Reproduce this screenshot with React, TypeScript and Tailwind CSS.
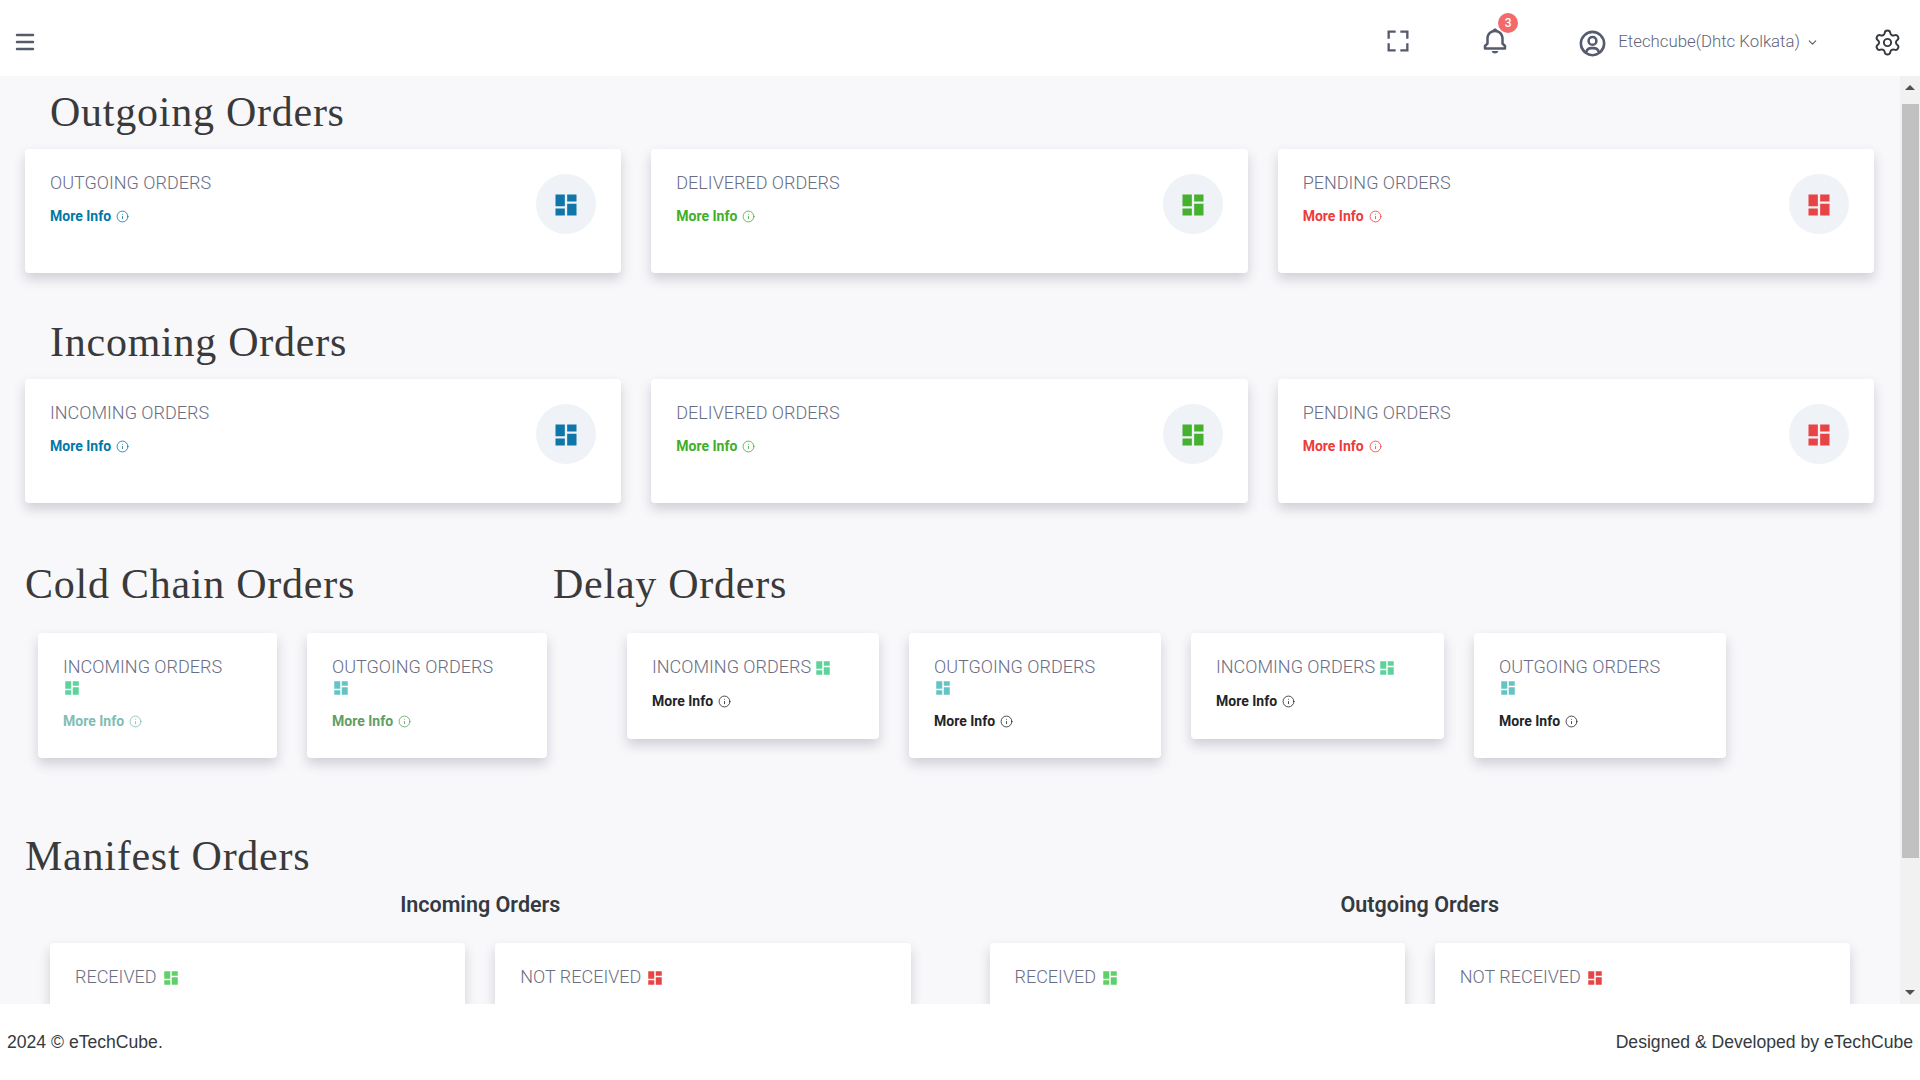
import { BiBell, BiFullscreen, BiUserCircle } from "react-icons/bi";
import { MdDashboard } from "react-icons/md";
import { ChevronDown, Info, Menu, Settings } from "lucide-react";

function Heading({ children, className = "" }: { children: string; className?: string }) {
  return (
    <h2 className={`font-['Liberation_Serif',serif] text-[42px] leading-[48px] tracking-[0.75px] text-[#3a3a3a] ${className}`}>
      {children}
    </h2>
  );
}

function MoreInfo({ color }: { color: string }) {
  return (
    <div className={`flex items-center gap-[5px] text-[14px] font-bold leading-[20px] ${color}`}>
      More Info
      <Info size={13} strokeWidth={1.5} className="mt-[1px]" />
    </div>
  );
}

function StatCard({ title, color, iconColor }: { title: string; color: string; iconColor: string }) {
  return (
    <div className="h-[124px] rounded-[4px] bg-white p-[25px] shadow-[0_6px_12px_rgba(60,64,80,0.22)] flex justify-between">
      <div>
        <div className="-mt-[1px] text-[18px] font-light leading-[20px] text-[#6a6e84]">{title}</div>
        <div className="mt-[13px]">
          <MoreInfo color={color} />
        </div>
      </div>
      <div className="flex h-[60px] w-[60px] items-center justify-center rounded-full bg-[#eff2f7]">
        <MdDashboard size={28} className={`mt-[2px] ${iconColor}`} />
      </div>
    </div>
  );
}

function SmallCard({
  title,
  moreColor,
  iconColor,
  inline = false,
}: {
  title: string;
  moreColor: string;
  iconColor: string;
  inline?: boolean;
}) {
  return (
    <div
      className={`rounded-[4px] bg-white px-[25px] pt-[24px] shadow-[0_6px_12px_rgba(60,64,80,0.22)] ${
        inline ? "h-[106px]" : "h-[125px]"
      }`}
    >
      <div className="text-[18px] font-light leading-[20px] text-[#6a6e84]">
        {title}
        {inline ? (
          <MdDashboard size={18} className={`ml-[3px] inline-block align-[-4px] ${iconColor}`} />
        ) : (
          <MdDashboard size={18} className={`mt-[2px] block ${iconColor}`} />
        )}
      </div>
      <div className="mt-[14px]">
        <MoreInfo color={moreColor} />
      </div>
    </div>
  );
}

function ManifestCard({ title, iconColor }: { title: string; iconColor: string }) {
  return (
    <div className="h-[100px] rounded-[4px] bg-white px-[25px] pt-[24px] shadow-[0_6px_12px_rgba(60,64,80,0.22)]">
      <div className="text-[18px] font-light leading-[20px] text-[#6a6e84]">
        {title}
        <MdDashboard size={18} className={`ml-[5px] inline-block align-[-4px] ${iconColor}`} />
      </div>
    </div>
  );
}

function Scrollbar() {
  return (
    <div className="flex w-[20px] shrink-0 flex-col items-center bg-[#f1f1f1]">
      <div className="flex h-[28px] items-start justify-center pt-[9px]">
        <div className="h-0 w-0 border-x-[5px] border-b-[5px] border-x-transparent border-b-[#505050]" />
      </div>
      <div className="h-[754px] w-[17px] bg-[#c1c1c1]" />
      <div className="flex-1" />
      <div className="flex h-[28px] items-end justify-center pb-[9px]">
        <div className="h-0 w-0 border-x-[5px] border-t-[5px] border-x-transparent border-t-[#505050]" />
      </div>
    </div>
  );
}

export default function App() {
  return (
    <div className="flex h-[1080px] w-[1920px] flex-col overflow-hidden bg-white font-['Roboto',sans-serif]">
      <header className="flex h-[76px] shrink-0 items-center bg-white pl-[13px] pr-[18px] pt-[8px]">
        <Menu size={24} strokeWidth={2.5} className="text-[#555b6d]" />
        <div className="flex-1" />
        <BiFullscreen size={28} className="-mt-[2px] text-[#555b6d]" />
        <div className="relative -mt-[2px] ml-[68px]">
          <BiBell size={30} className="text-[#555b6d]" />
          <span className="absolute -right-[8px] -top-[13px] flex h-[20px] w-[20px] items-center justify-center rounded-full bg-[#f46a6a] text-[12px] font-medium text-white">
            3
          </span>
        </div>
        <BiUserCircle size={31} className="ml-[67px] mt-[3px] text-[#555b6d]" />
        <span className="ml-[10px] text-[16.8px] font-light text-[#5f6478]">Etechcube(Dhtc Kolkata)</span>
        <ChevronDown size={13} className="ml-[6px] text-[#555b6d]" />
        <Settings size={29} strokeWidth={1.6} className="ml-[54px] mt-[1px] text-[#343a40]" />
      </header>

      <div className="flex h-[928px] shrink-0 bg-[#f8f8fb]">
        <main className="min-w-0 flex-1 overflow-hidden">
          <Heading className="ml-[50px] mt-[12px]">Outgoing Orders</Heading>
          <div className="mt-[13px] grid grid-cols-3 gap-[30px] pl-[25px] pr-[26px]">
            <StatCard title="OUTGOING ORDERS" color="text-[#0078a8]" iconColor="text-[#0f76aa]" />
            <StatCard title="DELIVERED ORDERS" color="text-[#3fae2a]" iconColor="text-[#46b02f]" />
            <StatCard title="PENDING ORDERS" color="text-[#ee3a3a]" iconColor="text-[#e74545]" />
          </div>

          <Heading className="ml-[50px] mt-[45px]">Incoming Orders</Heading>
          <div className="mt-[13px] grid grid-cols-3 gap-[30px] pl-[25px] pr-[26px]">
            <StatCard title="INCOMING ORDERS" color="text-[#0078a8]" iconColor="text-[#0f76aa]" />
            <StatCard title="DELIVERED ORDERS" color="text-[#3fae2a]" iconColor="text-[#46b02f]" />
            <StatCard title="PENDING ORDERS" color="text-[#ee3a3a]" iconColor="text-[#e74545]" />
          </div>

          <div className="mt-[57px] flex pl-[25px]">
            <Heading className="w-[528px]">Cold Chain Orders</Heading>
            <Heading>Delay Orders</Heading>
          </div>
          <div className="mt-[25px] flex items-start pl-[38px]">
            <div className="flex gap-[30px]">
              <div className="w-[239px]">
                <SmallCard title="INCOMING ORDERS" moreColor="text-[#80bdb4]" iconColor="text-[#5cd39a]" />
              </div>
              <div className="w-[240px]">
                <SmallCard title="OUTGOING ORDERS" moreColor="text-[#5f9e63]" iconColor="text-[#65c3c3]" />
              </div>
            </div>
            <div className="ml-[80px] flex items-start gap-[30px]">
              <div className="w-[252px]">
                <SmallCard inline title="INCOMING ORDERS" moreColor="text-[#212529]" iconColor="text-[#5cd39a]" />
              </div>
              <div className="w-[252px]">
                <SmallCard title="OUTGOING ORDERS" moreColor="text-[#212529]" iconColor="text-[#65c3c3]" />
              </div>
              <div className="w-[253px]">
                <SmallCard inline title="INCOMING ORDERS" moreColor="text-[#212529]" iconColor="text-[#5cd39a]" />
              </div>
              <div className="w-[252px]">
                <SmallCard title="OUTGOING ORDERS" moreColor="text-[#212529]" iconColor="text-[#65c3c3]" />
              </div>
            </div>
          </div>

          <Heading className="ml-[25px] mt-[74px]">Manifest Orders</Heading>
          <div className="mt-[13px] grid grid-cols-2 gap-[79px] px-[50px]">
            <div>
              <h3 className="text-center text-[21.5px] font-semibold leading-[24px] text-[#343a40]">Incoming Orders</h3>
              <div className="mt-[26px] grid grid-cols-2 gap-[30px]">
                <ManifestCard title="RECEIVED" iconColor="text-[#5fd068]" />
                <ManifestCard title="NOT RECEIVED" iconColor="text-[#e74545]" />
              </div>
            </div>
            <div>
              <h3 className="text-center text-[21.5px] font-semibold leading-[24px] text-[#343a40]">Outgoing Orders</h3>
              <div className="mt-[26px] grid grid-cols-2 gap-[30px]">
                <ManifestCard title="RECEIVED" iconColor="text-[#5fd068]" />
                <ManifestCard title="NOT RECEIVED" iconColor="text-[#e74545]" />
              </div>
            </div>
          </div>
        </main>
        <Scrollbar />
      </div>

      <footer className="flex h-[76px] shrink-0 items-center justify-between bg-white px-[7px] font-['Liberation_Sans',sans-serif] text-[17.6px] text-[#343a40]">
        <span>2024 © eTechCube.</span>
        <span>Designed &amp; Developed by eTechCube</span>
      </footer>
    </div>
  );
}
